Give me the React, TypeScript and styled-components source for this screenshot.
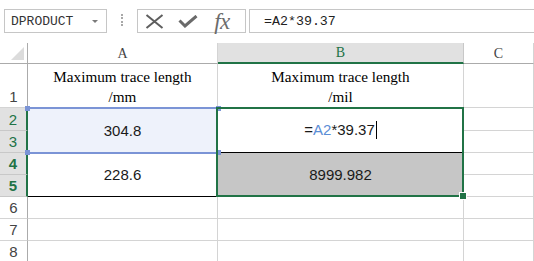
import styled, { createGlobalStyle } from "styled-components";

const GlobalStyle = createGlobalStyle`
  html, body {
    margin: 0;
    padding: 0;
    background: #ffffff;
    overflow: hidden;
  }
  * {
    box-sizing: border-box;
  }
`;

const GREEN = "#217346";
const GRID = "#d4d4d4";
const HEAD_LINE = "#ababab";
const REF_BLUE = "#7b94d6";

const Page = styled.div`
  width: 534px;
  height: 261px;
  overflow: hidden;
  font-family: "Liberation Sans", Arial, sans-serif;
`;

/* formula bar */
const Toolbar = styled.div`
  display: flex;
  align-items: flex-start;
  height: 43px;
  padding-top: 9px;
`;

const NameBox = styled.div`
  display: flex;
  align-items: center;
  width: 103px;
  height: 24px;
  margin-left: 4px;
  padding-left: 6px;
  border: 1px solid #c6c6c6;
  font-family: "Liberation Mono", "Courier New", monospace;
  font-size: 13px;
  color: #333;
`;

const DropArrow = styled.span`
  margin-left: auto;
  margin-right: 8px;
  width: 0;
  height: 0;
  border-left: 3px solid transparent;
  border-right: 3px solid transparent;
  border-top: 3px solid #7a7a7a;
`;

const Grip = styled.div`
  width: 2px;
  height: 12px;
  margin: 5px 0 0 14px;
  border-left: 2px dotted #a8a8a8;
`;

const ButtonGroup = styled.div`
  display: flex;
  align-items: center;
  width: 109px;
  height: 24px;
  margin-left: 14px;
  padding-left: 6px;
  gap: 14px;
  border: 1px solid #c6c6c6;
`;

const IconButton = styled.span`
  display: flex;
  align-items: center;
  justify-content: center;
  width: 20px;
  height: 22px;
`;

const Fx = styled.span`
  font-family: "Liberation Serif", "Times New Roman", serif;
  font-style: italic;
  font-size: 23px;
  color: #6b6b6b;
  letter-spacing: -0.5px;
  line-height: 22px;
  margin-top: 1px;
`;

const FormulaInput = styled.div`
  display: flex;
  align-items: center;
  flex: 1;
  height: 24px;
  margin-left: 3px;
  padding-left: 14px;
  border: 1px solid #c6c6c6;
  border-right: none;
  font-family: "Liberation Mono", "Courier New", monospace;
  font-size: 13.3px;
  color: #222;
`;

/* sheet */
const Sheet = styled.div`
  display: grid;
  grid-template-columns: 28px 190px 246px 1fr;
  grid-template-rows: 21px 44px 23px 22px 22px 22px 22px 22px 22px;
`;

const Corner = styled.div`
  grid-column: 1;
  grid-row: 1;
  display: flex;
  align-items: flex-end;
  justify-content: flex-end;
  padding: 0 3px 3px 0;
  border-right: 1px solid ${HEAD_LINE};
  border-bottom: 1px solid ${HEAD_LINE};
`;

const ColHead = styled.div<{ $col: number; $active?: boolean }>`
  grid-column: ${(p) => p.$col};
  grid-row: 1;
  display: flex;
  align-items: center;
  justify-content: center;
  padding-top: 1px;
  font-family: "Liberation Serif", "Times New Roman", serif;
  font-size: 14px;
  color: ${(p) => (p.$active ? GREEN : "#444")};
  background: ${(p) => (p.$active ? "#e1e1e1" : "#ffffff")};
  border-right: 1px solid ${(p) => (p.$active ? "#c8c8c8" : GRID)};
  border-bottom: ${(p) => (p.$active ? `2px solid ${GREEN}` : `1px solid ${HEAD_LINE}`)};
`;

const RowHead = styled.div<{ $row: number; $active?: boolean; $bold?: boolean; $bottom?: boolean }>`
  grid-column: 1;
  grid-row: ${(p) => p.$row + 1};
  display: flex;
  align-items: ${(p) => (p.$bottom ? "flex-end" : "center")};
  justify-content: center;
  padding-bottom: ${(p) => (p.$bottom ? "2px" : "0")};
  font-size: 15px;
  font-weight: ${(p) => (p.$bold ? 700 : 400)};
  color: ${(p) => (p.$active ? GREEN : "#444")};
  background: ${(p) => (p.$active ? "#e1e1e1" : "#ffffff")};
  border-right: ${(p) => (p.$active ? `2px solid ${GREEN}` : `1px solid ${HEAD_LINE}`)};
  border-bottom: 1px solid ${(p) => (p.$active ? "#c8c8c8" : GRID)};
`;

const Cell = styled.div<{
  $col: number;
  $row: number;
  $span?: number;
  $fill?: string;
  $bottomLine?: string;
  $rightLine?: string;
  $top?: boolean;
}>`
  grid-column: ${(p) => p.$col};
  grid-row: ${(p) => p.$row + 1} / span ${(p) => p.$span ?? 1};
  display: flex;
  align-items: ${(p) => (p.$top ? "flex-end" : "center")};
  justify-content: center;
  background: ${(p) => p.$fill ?? "#ffffff"};
  border-right: 1px solid ${(p) => p.$rightLine ?? GRID};
  border-bottom: 1px solid ${(p) => p.$bottomLine ?? GRID};
  font-size: 15px;
  color: #1a1a1a;
`;

const HeaderText = styled.div`
  font-family: "Liberation Serif", "Times New Roman", serif;
  font-size: 15.2px;
  line-height: 20px;
  text-align: center;
  color: #000;
`;

const Ref = styled.span`
  color: #5b8ed6;
`;

const Caret = styled.span`
  display: inline-block;
  width: 1px;
  height: 18px;
  margin-left: 1px;
  background: #000;
  vertical-align: -4px;
`;

const RefFrame = styled.div`
  grid-column: 2;
  grid-row: 3 / span 2;
  position: relative;
  margin: -1px 0 -1px 0;
  border-top: 2px solid ${REF_BLUE};
  border-bottom: 2px solid ${REF_BLUE};
  pointer-events: none;
  z-index: 1;
`;

const RefHandle = styled.span<{ $x: "l" | "r"; $y: "t" | "b" }>`
  position: absolute;
  width: 5px;
  height: 5px;
  background: ${REF_BLUE};
  ${(p) => (p.$x === "l" ? "left: -3px;" : "right: -3px;")}
  ${(p) => (p.$y === "t" ? "top: -3px;" : "bottom: -3px;")}
`;

const SelectionFrame = styled.div`
  grid-column: 3;
  grid-row: 3 / span 4;
  position: relative;
  margin: -1px 0 0 -2px;
  border: 2px solid ${GREEN};
  pointer-events: none;
  z-index: 2;
`;

const FillHandle = styled.span`
  position: absolute;
  right: -4px;
  bottom: -4px;
  width: 6px;
  height: 6px;
  background: ${GREEN};
  outline: 1px solid #ffffff;
`;

const rows = [1, 2, 3, 4, 5, 6, 7, 8];

export default function App() {
  return (
    <Page>
      <GlobalStyle />
      <Toolbar>
        <NameBox>
          DPRODUCT
          <DropArrow />
        </NameBox>
        <Grip />
        <ButtonGroup>
          <IconButton>
            <svg width="19" height="15" viewBox="0 0 19 15">
              <path d="M1.5 1 L17.5 14 M17.5 1 L1.5 14" stroke="#5e5e5e" strokeWidth="2" fill="none" />
            </svg>
          </IconButton>
          <IconButton>
            <svg width="20" height="13" viewBox="0 0 20 13">
              <path d="M1.5 5.5 L7 11 L18.5 1" stroke="#6a6a6a" strokeWidth="3" fill="none" strokeLinejoin="miter" />
            </svg>
          </IconButton>
          <IconButton>
            <Fx>fx</Fx>
          </IconButton>
        </ButtonGroup>
        <FormulaInput>=A2*39.37</FormulaInput>
      </Toolbar>

      <Sheet>
        <Corner>
          <svg width="13" height="13" viewBox="0 0 13 13">
            <polygon points="13,0 13,13 0,13" fill="#dcdcdc" />
          </svg>
        </Corner>
        <ColHead $col={2}>A</ColHead>
        <ColHead $col={3} $active>
          B
        </ColHead>
        <ColHead $col={4}>C</ColHead>

        {rows.map((r) => (
          <RowHead
            key={r}
            $row={r}
            $active={r >= 2 && r <= 5}
            $bold={r === 4 || r === 5}
            $bottom={r === 1}
          >
            {r}
          </RowHead>
        ))}

        <Cell $col={2} $row={1} $top>
          <HeaderText>
            Maximum trace length
            <br />
            /mm
          </HeaderText>
        </Cell>
        <Cell $col={3} $row={1} $top>
          <HeaderText>
            Maximum trace length
            <br />
            /mil
          </HeaderText>
        </Cell>
        <Cell $col={4} $row={1} />

        <Cell $col={2} $row={2} $span={2} $fill="#eef2fb">
          304.8
        </Cell>
        <Cell $col={3} $row={2} $span={2} $bottomLine="#000">
          <span>
            =<Ref>A2</Ref>*39.37
            <Caret />
          </span>
        </Cell>
        <Cell $col={4} $row={2} />
        <Cell $col={4} $row={3} />

        <Cell $col={2} $row={4} $span={2} $bottomLine="#000" $rightLine="#000">
          228.6
        </Cell>
        <Cell $col={3} $row={4} $span={2} $fill="#c6c6c6" $bottomLine="#000">
          8999.982
        </Cell>
        <Cell $col={4} $row={4} />
        <Cell $col={4} $row={5} />

        {[6, 7, 8].map((r) => [
          <Cell key={`a${r}`} $col={2} $row={r} />,
          <Cell key={`b${r}`} $col={3} $row={r} />,
          <Cell key={`c${r}`} $col={4} $row={r} />,
        ])}

        <RefFrame>
          <RefHandle $x="l" $y="t" />
          <RefHandle $x="r" $y="t" />
          <RefHandle $x="l" $y="b" />
          <RefHandle $x="r" $y="b" />
        </RefFrame>
        <SelectionFrame>
          <FillHandle />
        </SelectionFrame>
      </Sheet>
    </Page>
  );
}
